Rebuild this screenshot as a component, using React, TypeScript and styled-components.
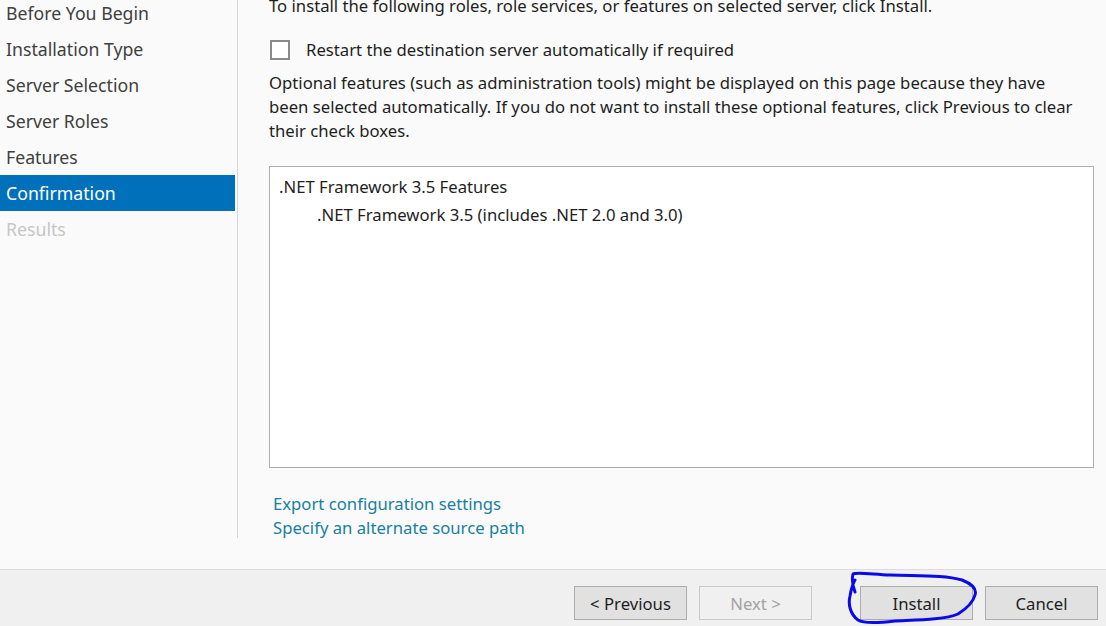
import React from "react";
import styled, { createGlobalStyle } from "styled-components";

const Global = createGlobalStyle`
  html, body { margin: 0; padding: 0; }
  body {
    width: 1106px;
    height: 626px;
    overflow: hidden;
    background: #fafafa;
    font-family: "Noto Sans", "Open Sans", sans-serif;
    color: #1e1e1e;
  }
`;

const Page = styled.div`
  position: relative;
  display: flex;
  flex-direction: column;
  width: 1106px;
  height: 626px;
  overflow: hidden;
`;

const Body = styled.div`
  display: flex;
  height: 569px;
  flex: none;
  padding-bottom: 31px;
  box-sizing: border-box;
  background: #fafafa;
`;

const Sidebar = styled.nav`
  width: 237px;
  flex: none;
  border-right: 1px solid #d6d6d6;
  display: flex;
  flex-direction: column;
  margin-top: -5px;
`;

const NavItem = styled.div<{ $active?: boolean; $disabled?: boolean }>`
  height: 36px;
  flex: none;
  line-height: 36px;
  padding-left: 6px;
  margin-right: 2px;
  font-size: 17.7px;
  white-space: nowrap;
  background: ${(p) => (p.$active ? "#0070bb" : "transparent")};
  color: ${(p) => (p.$active ? "#ffffff" : p.$disabled ? "#c6c6c6" : "#404040")};
`;

const Content = styled.main`
  flex: 1;
  min-width: 0;
  padding-left: 31px;
  padding-right: 12px;
  display: flex;
  flex-direction: column;
  font-size: 16.7px;
  line-height: 24px;
  color: #1e1e1e;
`;

const Intro = styled.p`
  margin: -6px 0 0 0;
  flex: none;
  white-space: nowrap;
`;

const CheckRow = styled.label`
  display: flex;
  flex: none;
  align-items: center;
  gap: 16px;
  margin-top: 20px;
  height: 24px;
`;

const Box = styled.span`
  width: 20px;
  height: 20px;
  box-sizing: border-box;
  border: 2px solid #8a8a8a;
  background: #ffffff;
  margin-left: 1px;
`;

const Para = styled.p`
  margin: 9px 0 0 0;
  flex: none;
  width: 815px;
`;

const ListBox = styled.div`
  margin-top: 23px;
  flex: none;
  height: 302px;
  box-sizing: border-box;
  border: 1px solid #adadad;
  background: #ffffff;
  padding: 6px 9px;
  display: flex;
  flex-direction: column;
`;

const ListItem = styled.div<{ $indent?: boolean }>`
  height: 28px;
  line-height: 28px;
  padding-left: ${(p) => (p.$indent ? "38px" : "0")};
  white-space: nowrap;
`;

const Links = styled.div`
  margin-top: 24px;
  flex: none;
  padding-left: 4px;
  display: flex;
  flex-direction: column;
`;

const Link = styled.a`
  color: #17809f;
  text-decoration: none;
  height: 24px;
  line-height: 24px;
  width: fit-content;
`;

const Footer = styled.footer`
  flex: 1;
  background: #f0f0f0;
  border-top: 1px solid #dcdcdc;
  display: flex;
  align-items: flex-start;
  justify-content: flex-end;
  padding: 16px 8px 0 0;
  gap: 12px;
`;

const Button = styled.button<{ $gapLeft?: number }>`
  width: 113px;
  height: 34px;
  box-sizing: border-box;
  border: 1px solid #adadad;
  background: #e1e1e1;
  color: #1e1e1e;
  font-family: "Noto Sans", "Open Sans", sans-serif;
  font-size: 16.7px;
  padding: 0;
  margin-left: ${(p) => (p.$gapLeft ? `${p.$gapLeft}px` : "0")};
  &:disabled {
    background: #f0f0f0;
    border-color: #c8c8c8;
    color: #a3a3a3;
  }
`;

const Scribble = styled.svg`
  position: absolute;
  left: 0;
  top: 0;
  width: 1106px;
  height: 626px;
  pointer-events: none;
`;

const navItems = [
  "Before You Begin",
  "Installation Type",
  "Server Selection",
  "Server Roles",
  "Features",
  "Confirmation",
  "Results",
];

export default function App() {
  return (
    <Page>
      <Global />
      <Body>
        <Sidebar>
          {navItems.map((n) => (
            <NavItem key={n} $active={n === "Confirmation"} $disabled={n === "Results"}>
              {n}
            </NavItem>
          ))}
        </Sidebar>
        <Content>
          <Intro>
            To install the following roles, role services, or features on selected server, click Install.
          </Intro>
          <CheckRow>
            <Box />
            <span>Restart the destination server automatically if required</span>
          </CheckRow>
          <Para>
            Optional features (such as administration tools) might be displayed on this page because they have
            been selected automatically. If you do not want to install these optional features, click Previous to clear
            their check boxes.
          </Para>
          <ListBox>
            <ListItem>.NET Framework 3.5 Features</ListItem>
            <ListItem $indent>.NET Framework 3.5 (includes .NET 2.0 and 3.0)</ListItem>
          </ListBox>
          <Links>
            <Link>Export configuration settings</Link>
            <Link>Specify an alternate source path</Link>
          </Links>
        </Content>
      </Body>
      <Footer>
        <Button>&lt; Previous</Button>
        <Button disabled>Next &gt;</Button>
        <Button $gapLeft={36}>Install</Button>
        <Button>Cancel</Button>
      </Footer>
      <Scribble viewBox="0 0 1106 626">
        <path
          d="M855 592 C852 584 852 578 853 574 C856 572 870 574 890 575 C920 576 945 575 962 580 C972 584 977 589 975 595 C973 603 966 609 958 614 C945 620 915 620 895 621 C878 623 864 624 858 620 C850 614 848 604 850 596 C851 590 852 585 855 580"
          fill="none"
          stroke="#0a0ae6"
          strokeWidth="3"
          strokeLinecap="round"
          strokeLinejoin="round"
        />
      </Scribble>
    </Page>
  );
}
